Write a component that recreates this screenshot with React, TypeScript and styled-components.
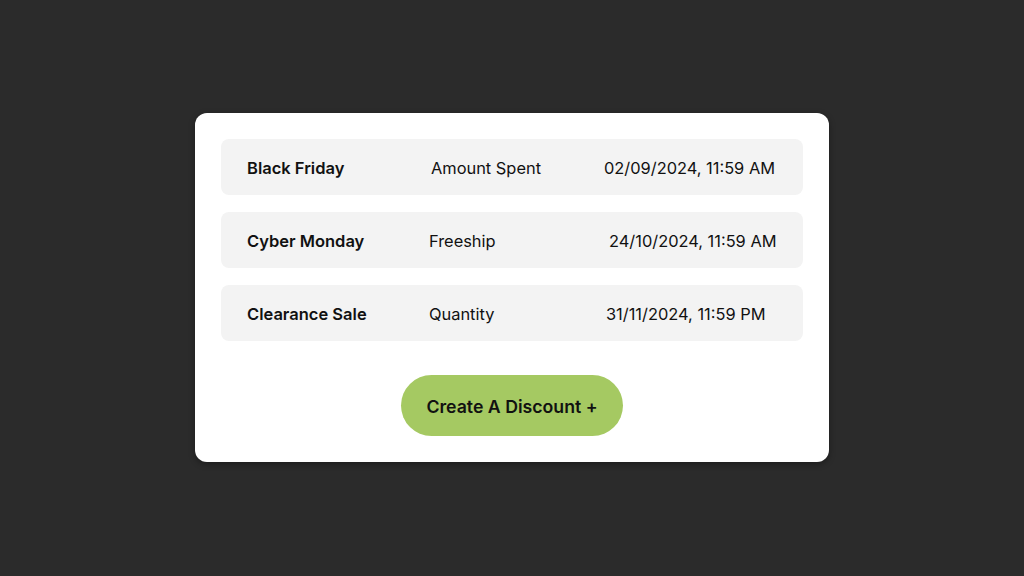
import { createGlobalStyle, styled } from "styled-components";

type Discount = {
	name: string;
	rule: string;
	expires: string;
	ruleShift?: number;
	dateShift?: number;
};

const discounts: Discount[] = [
	{ name: "Black Friday", rule: "Amount Spent", expires: "02/09/2024, 11:59 AM", ruleShift: 2, dateShift: -2 },
	{ name: "Cyber Monday", rule: "Freeship", expires: "24/10/2024, 11:59 AM", dateShift: 3 },
	{ name: "Clearance Sale", rule: "Quantity", expires: "31/11/2024, 11:59 PM" },
];

const GlobalStyle = createGlobalStyle`
	html, body {
		margin: 0;
		padding: 0;
		background: #2b2b2b;
		font-family: Inter, "Noto Sans", sans-serif;
		-webkit-font-smoothing: antialiased;
	}
`;

export default function App() {
	return (
		<>
			<GlobalStyle />
			<Page>
				<Card>
					<List>
						{discounts.map((d) => (
							<Row key={d.name}>
								<Name>{d.name}</Name>
								<Cell $shift={d.ruleShift ?? 0}>{d.rule}</Cell>
								<Cell $shift={d.dateShift ?? 0}>{d.expires}</Cell>
							</Row>
						))}
					</List>
					<CreateButton type="button">Create A Discount +</CreateButton>
				</Card>
			</Page>
		</>
	);
}

const Page = styled.main`
	width: 1024px;
	height: 576px;
	display: flex;
	align-items: flex-start;
	justify-content: center;
	padding-top: 113px;
	box-sizing: border-box;
`;

const Card = styled.section`
	width: 634px;
	box-sizing: border-box;
	padding: 26px;
	background: #ffffff;
	border-radius: 12px;
	box-shadow: 0 2px 6px rgba(0, 0, 0, 0.35);
	display: flex;
	flex-direction: column;
	align-items: center;
`;

const List = styled.div`
	width: 100%;
	display: grid;
	gap: 17px;
`;

const Row = styled.div`
	height: 56px;
	box-sizing: border-box;
	padding: 1px 26px 0;
	background: #f3f3f3;
	border-radius: 8px;
	display: grid;
	grid-template-columns: 182px 177px minmax(0, 1fr);
	align-items: center;
	color: #111111;
	font-size: 16.4px;
	white-space: nowrap;
`;

const Name = styled.div`
	font-weight: 600;
	font-size: 16.5px;
`;

const Cell = styled.div<{ $shift: number }>`
	font-weight: 400;
	margin-left: ${(p) => p.$shift}px;
`;

const CreateButton = styled.button`
	margin-top: 34px;
	width: 222px;
	height: 61px;
	padding: 2px 0 0;
	border: none;
	border-radius: 31px;
	background: #a5c962;
	color: #111111;
	font-family: Inter, "Noto Sans", sans-serif;
	font-size: 17.7px;
	font-weight: 600;
	cursor: pointer;
`;
